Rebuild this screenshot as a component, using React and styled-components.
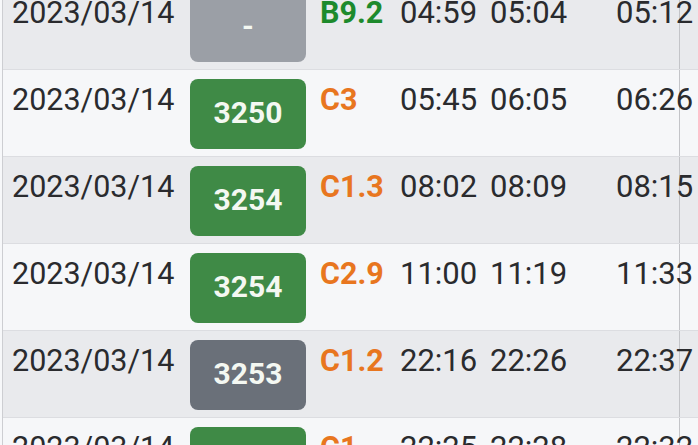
import React from 'react';
import styled, { createGlobalStyle } from 'styled-components';

const GlobalStyle = createGlobalStyle`
  html, body {
    margin: 0;
    padding: 0;
    background: #f7f8fa;
    overflow: hidden;
  }
  body {
    font-family: Roboto, "Liberation Sans", Arial, sans-serif;
  }
`;

const rows = [
  { date: '2023/03/14', train: '-', status: 'idle', code: 'B9.2', level: 'ok', t1: '04:59', t2: '05:04', t3: '05:12' },
  { date: '2023/03/14', train: '3250', status: 'active', code: 'C3', level: 'warn', t1: '05:45', t2: '06:05', t3: '06:26' },
  { date: '2023/03/14', train: '3254', status: 'active', code: 'C1.3', level: 'warn', t1: '08:02', t2: '08:09', t3: '08:15' },
  { date: '2023/03/14', train: '3254', status: 'active', code: 'C2.9', level: 'warn', t1: '11:00', t2: '11:19', t3: '11:33' },
  { date: '2023/03/14', train: '3253', status: 'done', code: 'C1.2', level: 'warn', t1: '22:16', t2: '22:26', t3: '22:37' },
  { date: '2023/03/14', train: '3254', status: 'active', code: 'C1', level: 'warn', t1: '22:25', t2: '22:28', t3: '22:32' },
];

const badgeColors = {
  idle: '#9b9fa6',
  active: '#3f8a46',
  done: '#6a7079',
};

const levelColors = {
  ok: '#1d8a2c',
  warn: '#e8761f',
};

const Table = styled.div`
  margin-top: -17px;
  margin-left: 2px;
  border-left: 1px solid #cdced2;
  display: flex;
  flex-direction: column;
`;

const Row = styled.div`
  display: grid;
  grid-template-columns: 187px 130px 80px 90px 126px 64px 1fr;
  height: 87px;
  box-sizing: border-box;
  border-bottom: 1px solid #dcdde1;
  background: ${({ striped }) => (striped ? '#e9eaed' : '#f6f7f9')};
`;

const Cell = styled.div`
  padding-top: 13px;
  font-size: 31px;
  line-height: 34px;
  color: #2a2b2e;
  white-space: nowrap;
`;

const DateCell = styled(Cell)`
  padding-left: 9px;
  font-size: 30.5px;
`;

const CodeCell = styled(Cell)`
  font-weight: 700;
  font-size: 30.5px;
  color: ${({ level }) => levelColors[level]};
`;

const LastCell = styled(Cell)`
  border-right: 1px solid #c3c4c8;
`;

const BadgeCell = styled.div`
  padding-top: 9px;
`;

const Badge = styled.div`
  width: 116px;
  height: 70px;
  box-sizing: border-box;
  padding-bottom: 4px;
  border-radius: 8px;
  background: ${({ status }) => badgeColors[status]};
  color: #f4f8f2;
  font-size: 30px;
  font-weight: 700;
  display: flex;
  align-items: center;
  justify-content: center;
`;

export default function App() {
  return (
    <>
      <GlobalStyle />
      <Table>
        {rows.map((r, i) => (
          <Row key={i} striped={i % 2 === 0}>
            <DateCell>{r.date}</DateCell>
            <BadgeCell>
              <Badge status={r.status}>{r.train}</Badge>
            </BadgeCell>
            <CodeCell level={r.level}>{r.code}</CodeCell>
            <Cell>{r.t1}</Cell>
            <Cell>{r.t2}</Cell>
            <LastCell>{r.t3}</LastCell>
            <div />
          </Row>
        ))}
      </Table>
    </>
  );
}
